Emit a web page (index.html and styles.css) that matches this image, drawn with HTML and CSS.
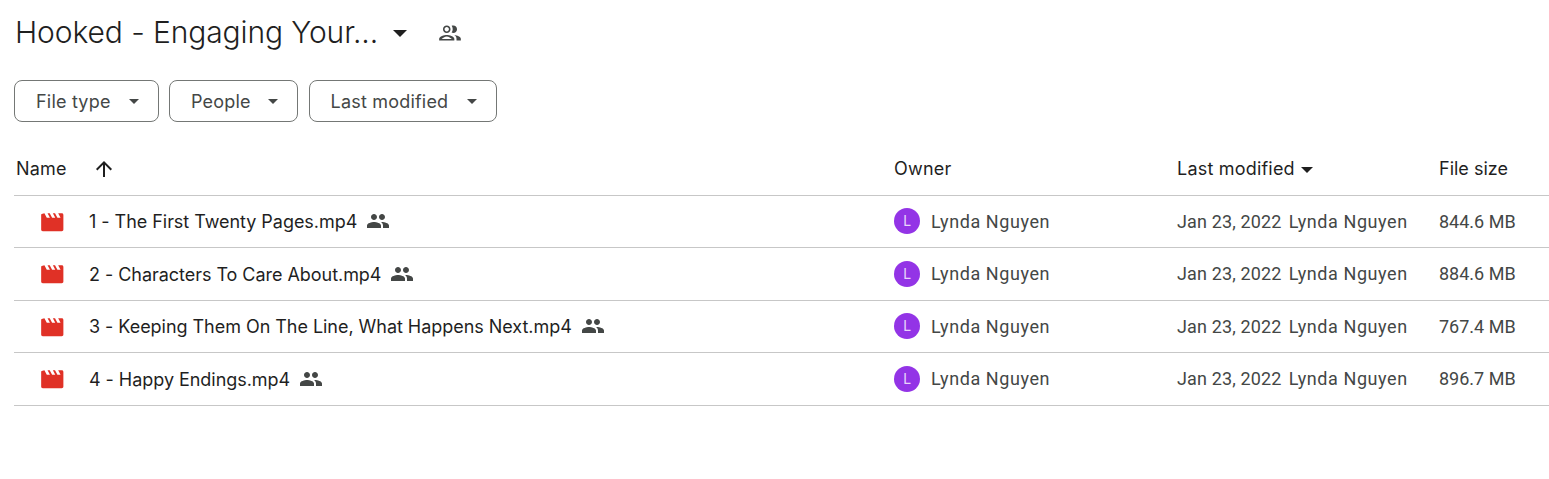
FILE: index.html
```html
<!DOCTYPE html>
<html lang="en">

<head>
  <meta charset="UTF-8" />
  <meta name="viewport" content="width=device-width, initial-scale=1" />
  <title>Hooked - Engaging Your...</title>
  <link rel="stylesheet" href="styles.css">
</head>

<body>

  <svg class="sprites" width="0" height="0">
    <symbol id="people" viewBox="0 0 24 24">
      <path d="M16 11c1.66 0 2.99-1.34 2.99-3S17.66 5 16 5s-3 1.34-3 3 1.34 3 3 3zm-8 0c1.66 0 2.99-1.34 2.99-3S9.66 5 8 5 5 6.34 5 8s1.34 3 3 3zm0 2c-2.33 0-7 1.17-7 3.5V19h14v-2.5C15 14.17 10.33 13 8 13zm8 0c-.29 0-.62.02-.97.05 1.16.84 1.97 1.97 1.97 3.45V19h6v-2.5c0-2.33-4.67-3.5-7-3.5z" />
    </symbol>
    <symbol id="movie" viewBox="0 0 24 24">
      <path d="M2.5 4.5 5 4l2.2 4h2.9L7.9 4h2l2.2 4H15l-2.2-4h2l2.2 4h2.900L17.700 4H21c.9 0 1.500.6 1.500 1.500V19c0 .9-.6 1.500-1.500 1.500H3.500c-.9 0-1.500-.6-1.500-1.500V5z" />
    </symbol>
  </svg>

  <header class="title-row">
    <h1>Hooked - Engaging Your...</h1>
    <span class="title-caret"></span>
    <svg class="shared-outline" viewBox="0 0 24 24">
      <path d="M9 13.750c-2.340 0-7 1.170-7 3.500V19h14v-1.750c0-2.330-4.660-3.500-7-3.500zM4.340 17.500c.84-.58 2.870-2.250 4.660-2.250s3.820 1.670 4.660 2.250H4.340zM9 12c1.930 0 3.500-1.570 3.500-3.500S10.930 5 9 5 5.500 6.570 5.500 8.500 7.070 12 9 12zm0-5.500c1.100 0 2 .9 2 2s-.9 2-2 2-2-.9-2-2 .9-2 2-2zm7.040 7.310c1.160.84 1.960 1.960 1.960 3.440V19h4v-1.750c0-2.020-3.500-3.170-5.960-3.440zM15 12c1.930 0 3.500-1.570 3.500-3.500S16.930 5 15 5c-.54 0-1.040.13-1.500.35.630.89 1 1.980 1 3.150s-.37 2.260-1 3.150c.46.220.96.350 1.500.350z" />
    </svg>
  </header>

  <div class="filters">
    <button class="chip chip-type">File type <span class="chip-caret"></span></button>
    <button class="chip chip-people">People <span class="chip-caret"></span></button>
    <button class="chip chip-date">Last modified <span class="chip-caret"></span></button>
  </div>

  <div class="file-list">
    <div class="row head">
      <div class="cell-name">
        <span>Name</span>
        <svg class="sort-arrow" viewBox="0 0 24 24">
          <path d="M4 12l1.410 1.410L11 7.830V20h2V7.830l5.580 5.590L20 12l-8-8-8 8z" />
        </svg>
      </div>
      <div>Owner</div>
      <div class="cell-date">Last modified <span class="head-caret"></span></div>
      <div class="cell-size">File size</div>
    </div>

    <div class="row file">
      <div class="cell-name">
        <svg class="file-icon"><use href="#movie" /></svg>
        <span class="file-name">1 - The First Twenty Pages.mp4</span>
        <svg class="shared"><use href="#people" /></svg>
      </div>
      <div class="cell-owner"><span class="avatar">L</span>Lynda Nguyen</div>
      <div class="cell-date"><span>Jan 23, 2022</span><span>Lynda Nguyen</span></div>
      <div>844.6 MB</div>
    </div>

    <div class="row file">
      <div class="cell-name">
        <svg class="file-icon"><use href="#movie" /></svg>
        <span class="file-name">2 - Characters To Care About.mp4</span>
        <svg class="shared"><use href="#people" /></svg>
      </div>
      <div class="cell-owner"><span class="avatar">L</span>Lynda Nguyen</div>
      <div class="cell-date"><span>Jan 23, 2022</span><span>Lynda Nguyen</span></div>
      <div>884.6 MB</div>
    </div>

    <div class="row file">
      <div class="cell-name">
        <svg class="file-icon"><use href="#movie" /></svg>
        <span class="file-name">3 - Keeping Them On The Line, What Happens Next.mp4</span>
        <svg class="shared"><use href="#people" /></svg>
      </div>
      <div class="cell-owner"><span class="avatar">L</span>Lynda Nguyen</div>
      <div class="cell-date"><span>Jan 23, 2022</span><span>Lynda Nguyen</span></div>
      <div>767.4 MB</div>
    </div>

    <div class="row file">
      <div class="cell-name">
        <svg class="file-icon"><use href="#movie" /></svg>
        <span class="file-name">4 - Happy Endings.mp4</span>
        <svg class="shared"><use href="#people" /></svg>
      </div>
      <div class="cell-owner"><span class="avatar">L</span>Lynda Nguyen</div>
      <div class="cell-date"><span>Jan 23, 2022</span><span>Lynda Nguyen</span></div>
      <div>896.7 MB</div>
    </div>
  </div>

</body>

</html>
```

FILE: styles.css
```css
body {
  margin: 0;
  padding: 0 0 0 14px;
  background-color: #fff;
  color: #1f1f1f;
  font-family: Roboto, "Liberation Sans", sans-serif;
  font-size: 18px;
  overflow: hidden;
}

.sprites {
  display: block;
}

.title-row {
  display: flex;
  align-items: center;
  height: 66px;
}

h1 {
  margin: 0 0 2px 1px;
  font-family: Inter, Roboto, sans-serif;
  font-size: 30px;
  font-weight: 300;
  letter-spacing: -0.1px;
  color: #1f1f1f;
  width: 376px;
  white-space: nowrap;
}

.title-caret {
  width: 0;
  height: 0;
  margin-left: 2px;
  border: 7px solid transparent;
  border-top-color: #1f1f1f;
  border-bottom: 0;
}

.shared-outline {
  width: 26px;
  height: 26px;
  margin-left: 30px;
  fill: #444746;
}

.filters {
  display: flex;
  gap: 10.5px;
  margin-top: 14px;
}

.chip {
  display: flex;
  align-items: center;
  justify-content: space-between;
  height: 42px;
  padding: 0 19px 0 21px;
  border: 1px solid #747775;
  border-radius: 8px;
  background-color: #fff;
  color: #444746;
  font-family: Inter, Roboto, sans-serif;
  font-size: 18px;
  letter-spacing: 0.2px;
  box-sizing: border-box;
}

.chip-type {
  width: 144.5px;
}

.chip-people {
  width: 129px;
}

.chip-date {
  width: 188px;
}

.chip-caret {
  width: 0;
  height: 0;
  border: 5px solid transparent;
  border-top-color: #444746;
  border-bottom: 0;
}

.file-list {
  margin-top: 20.6px;
}

.row {
  display: grid;
  grid-template-columns: 880px 283px 262px 1fr;
  align-items: center;
  border-bottom: 1px solid #c7c7c7;
  box-sizing: border-box;
  height: 52.5px;
  color: #444746;
}

.head {
  font-family: Inter, Roboto, sans-serif;
  font-size: 18px;
  letter-spacing: 0.2px;
  color: #1f1f1f;
  height: 53px;
}

.cell-name,
.cell-owner,
.cell-date {
  display: flex;
  align-items: center;
}

.head .cell-name {
  padding-left: 2px;
}

.head .cell-size {
  letter-spacing: 0;
}

.sort-arrow {
  width: 24px;
  height: 24px;
  margin-left: 25px;
  fill: #1f1f1f;
}

.head-caret {
  width: 0;
  height: 0;
  margin-left: 6px;
  margin-top: 2px;
  border: 6px solid transparent;
  border-top-color: #1f1f1f;
  border-bottom: 0;
}

.file-icon {
  width: 26px;
  height: 26px;
  margin-left: 25px;
  margin-top: 1px;
  fill: #e03126;
}

.file-name {
  margin-left: 24px;
  margin-top: 1px;
  font-family: Inter, Roboto, sans-serif;
  font-size: 18px;
  letter-spacing: -0.04px;
  color: #1f1f1f;
}

.shared {
  width: 24px;
  height: 24px;
  margin-left: 9px;
  fill: #444746;
}

.avatar {
  display: flex;
  align-items: center;
  justify-content: center;
  width: 26px;
  height: 26px;
  margin-right: 11px;
  border-radius: 50%;
  background-color: #9334e6;
  color: #e8d5fa;
  font-size: 14px;
  letter-spacing: 0;
}

.cell-owner,
.file .cell-date span:last-child {
  letter-spacing: 0.58px;
}

.file .cell-date {
  gap: 7px;
  letter-spacing: 0.15px;
}
```
